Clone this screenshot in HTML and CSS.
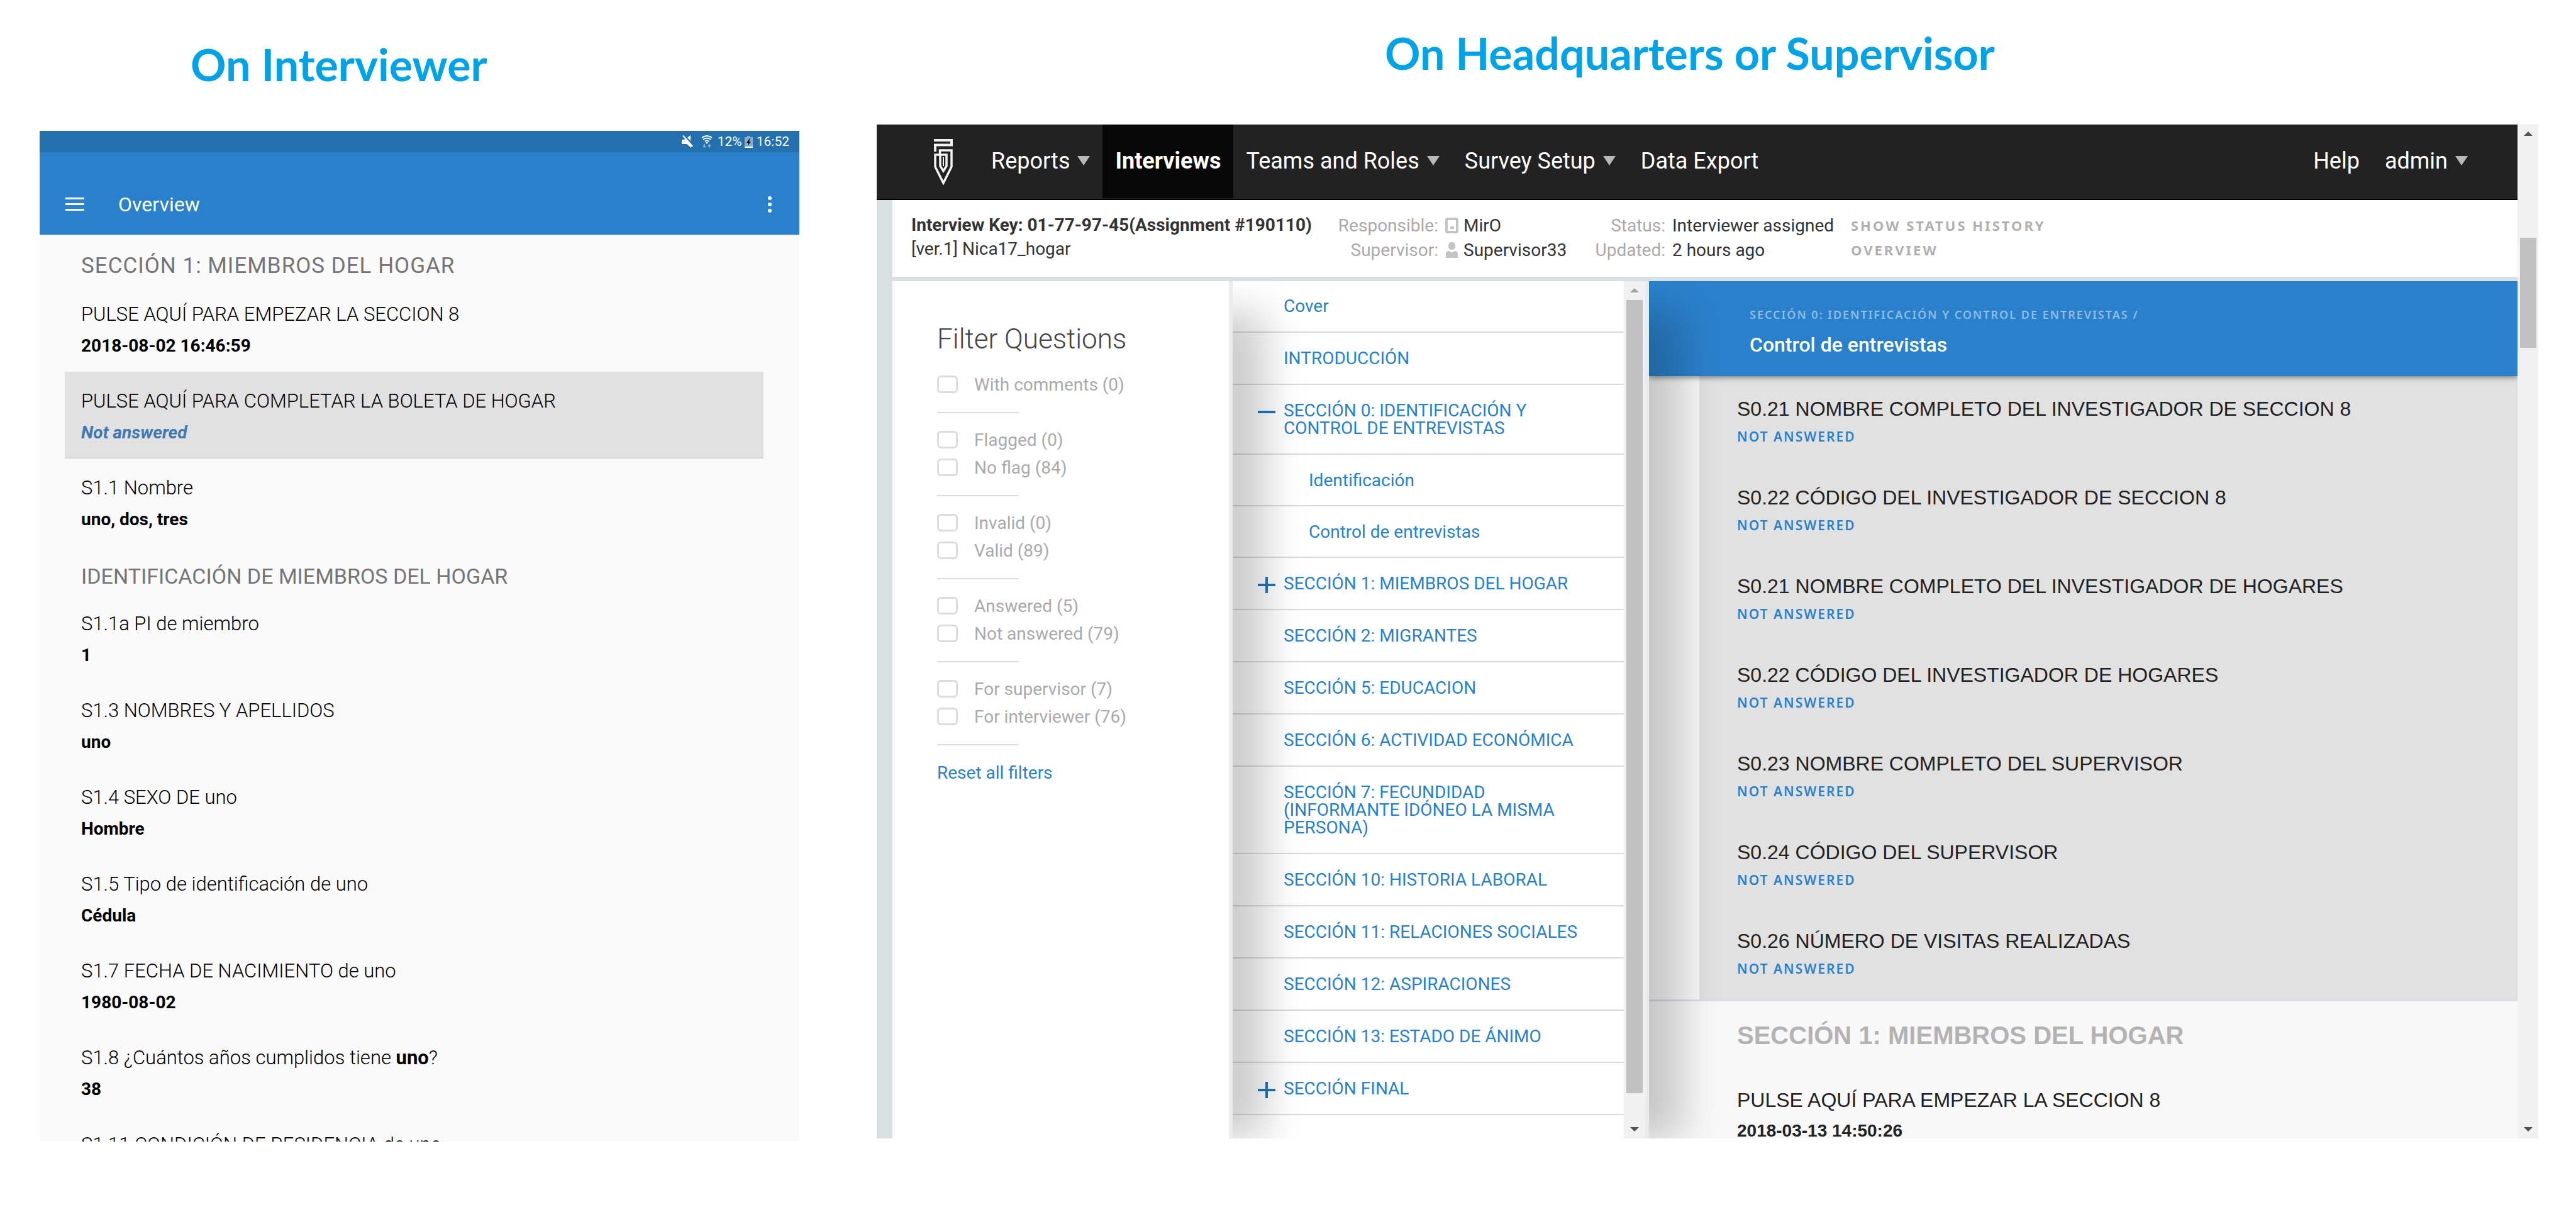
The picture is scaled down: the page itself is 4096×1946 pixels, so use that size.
FILE: index.html
```html
<!DOCTYPE html>
<html lang="es">
<head>
<meta charset="utf-8">
<title>Interview overview</title>
<link rel="stylesheet" href="styles.css">
</head>
<body>
<main class="page">
  <section class="side side-interviewer">
    <h1 class="side-title">On Interviewer</h1>
    <div class="tablet">
      <div class="status-bar">
        <svg class="ico-mute" viewBox="0 0 18 20"><path d="M0 7h4l3-2 8 13v2L8 14H0zM14 0v9L9 4zM1 1l2-1 15 17-2 2z" fill="#fff"/></svg>
        <svg class="ico-wifi" viewBox="0 0 18 20"><g fill="none" stroke="#fff" stroke-width="2"><path d="M1 4q8-6 16 0M3 7q6-5 12 0M6 10q3-3 6 0"/></g><path d="M7 11h4l-2 3z" fill="#fff"/><path d="M5 14v5M3 17l2 2 2-2M13 20v-5M11 17l2-2 2 2" fill="none" stroke="#7fa9cf" stroke-width="2"/></svg>
        <span class="battery-level">12%</span>
        <svg class="ico-battery" viewBox="0 0 13 19"><path d="M4 0h5v2h4v17H0V2h4z" fill="#86acce"/><path d="M0 17h13v2H0z" fill="#fff"/><path d="M8 4L3 11h3l-1 5 5-7H7l2-5z" fill="#111"/></svg>
        <time>16:52</time>
      </div>
      <header class="app-bar">
        <button class="icon-button" aria-label="Menu"><svg width="30" height="22" viewBox="0 0 30 22"><path d="M0 0h30v3H0zM0 9h30v3H0zM0 18h30v3H0z" fill="#fff"/></svg></button>
        <h2 class="app-title">Overview</h2>
        <button class="icon-button" aria-label="More"><svg width="6" height="26" viewBox="0 0 6 26"><g fill="#fff"><circle cx="3" cy="3" r="3"/><circle cx="3" cy="13" r="3"/><circle cx="3" cy="23" r="3"/></g></svg></button>
      </header>
      <div class="answers">
        <h3 class="group-title group-title-main">SECCIÓN 1: MIEMBROS DEL HOGAR</h3>
        <div class="entry"><p class="question">PULSE AQUÍ PARA EMPEZAR LA SECCION 8</p><p class="answer">2018-08-02 16:46:59</p></div>
        <div class="entry entry-empty"><p class="question">PULSE AQUÍ PARA COMPLETAR LA BOLETA DE HOGAR</p><p class="answer">Not answered</p></div>
        <div class="entry"><p class="question">S1.1 Nombre</p><p class="answer">uno, dos, tres</p></div>
        <h3 class="group-title">IDENTIFICACIÓN DE MIEMBROS DEL HOGAR</h3>
        <div class="entry"><p class="question">S1.1a PI de miembro</p><p class="answer">1</p></div>
        <div class="entry"><p class="question">S1.3 NOMBRES Y APELLIDOS</p><p class="answer">uno</p></div>
        <div class="entry"><p class="question">S1.4 SEXO DE uno</p><p class="answer">Hombre</p></div>
        <div class="entry"><p class="question">S1.5 Tipo de identificación de uno</p><p class="answer">Cédula</p></div>
        <div class="entry"><p class="question">S1.7 FECHA DE NACIMIENTO de uno</p><p class="answer">1980-08-02</p></div>
        <div class="entry"><p class="question">S1.8 ¿Cuántos años cumplidos tiene <b>uno</b>?</p><p class="answer">38</p></div>
        <div class="entry"><p class="question">S1.11 CONDICIÓN DE RESIDENCIA de uno</p></div>
      </div>
    </div>
  </section>

  <section class="side side-hq">
    <h1 class="side-title">On Headquarters or Supervisor</h1>
    <div class="browser">
      <div class="site">
        <nav class="navbar">
          <a class="brand" href="#" aria-label="Survey Solutions"><svg width="30" height="73" viewBox="0 0 30 73"><g fill="none" stroke="#f2f2f2" stroke-width="4"><path d="M0 2H28V9.500H2V20"/><path d="M9.500 27V18H28V44L15 70L2 44V25H20V43L15 51L10 43V25" stroke-width="3.500"/><path d="M15 29V43" stroke-width="2"/></g></svg></a>
          <button class="nav-item">Reports<span class="caret"></span></button>
          <a class="nav-item active" href="#">Interviews</a>
          <button class="nav-item">Teams and Roles<span class="caret"></span></button>
          <button class="nav-item">Survey Setup<span class="caret"></span></button>
          <a class="nav-item" href="#">Data Export</a>
          <a class="nav-item push" href="#">Help</a>
          <button class="nav-item">admin<span class="caret"></span></button>
        </nav>
        <div class="workspace">
          <header class="info">
            <div class="info-key"><strong>Interview Key: 01-77-97-45(Assignment #190110)</strong><br>[ver.1] Nica17_hogar</div>
            <dl class="facts facts-people">
              <dt>Responsible:</dt>
              <dd><svg width="21" height="25" viewBox="0 0 21 25"><rect x="2" y="2" width="17" height="21" rx="2" fill="none" stroke="#c4c4c4" stroke-width="4"/><path d="M8 14h6v4H8z" fill="#c4c4c4"/></svg>MirO</dd>
              <dt>Supervisor:</dt>
              <dd><svg width="21" height="25" viewBox="0 0 21 25"><path d="M10.500 0C14 0 16 2 16 6s-2 6-5.500 6S5 10 5 6s2-6 5.500-6zM1 25v-6c0-4 3-5 5-5q4.500 4 9 0c2 0 5 1 5 5v6z" fill="#c4c4c4"/></svg>Supervisor33</dd>
            </dl>
            <dl class="facts">
              <dt>Status:</dt><dd>Interviewer assigned</dd>
              <dt>Updated:</dt><dd>2 hours ago</dd>
            </dl>
            <div class="info-actions"><button>SHOW STATUS HISTORY</button><button>OVERVIEW</button></div>
          </header>
          <div class="columns">
            <form class="filters">
              <h2>Filter Questions</h2>
              <div class="filter-group"><label><input type="checkbox">With comments (0)</label></div>
              <div class="filter-group"><label><input type="checkbox">Flagged (0)</label><label><input type="checkbox">No flag (84)</label></div>
              <div class="filter-group"><label><input type="checkbox">Invalid (0)</label><label><input type="checkbox">Valid (89)</label></div>
              <div class="filter-group"><label><input type="checkbox">Answered (5)</label><label><input type="checkbox">Not answered (79)</label></div>
              <div class="filter-group"><label><input type="checkbox">For supervisor (7)</label><label><input type="checkbox">For interviewer (76)</label></div>
              <button type="reset" class="reset">Reset all filters</button>
            </form>
            <div class="sections">
              <ul class="section-list">
                <li><a href="#">Cover</a></li>
                <li><a href="#">INTRODUCCIÓN</a></li>
                <li><button class="toggle open" aria-label="Collapse"></button><a href="#">SECCIÓN 0: IDENTIFICACIÓN Y CONTROL DE ENTREVISTAS</a></li>
                <li class="nested"><a href="#">Identificación</a></li>
                <li class="nested"><a href="#">Control de entrevistas</a></li>
                <li><button class="toggle" aria-label="Expand"></button><a href="#">SECCIÓN 1: MIEMBROS DEL HOGAR</a></li>
                <li><a href="#">SECCIÓN 2: MIGRANTES</a></li>
                <li><a href="#">SECCIÓN 5: EDUCACION</a></li>
                <li><a href="#">SECCIÓN 6: ACTIVIDAD ECONÓMICA</a></li>
                <li><a href="#">SECCIÓN 7: FECUNDIDAD (INFORMANTE IDÓNEO LA MISMA PERSONA)</a></li>
                <li><a href="#">SECCIÓN 10: HISTORIA LABORAL</a></li>
                <li><a href="#">SECCIÓN 11: RELACIONES SOCIALES</a></li>
                <li><a href="#">SECCIÓN 12: ASPIRACIONES</a></li>
                <li><a href="#">SECCIÓN 13: ESTADO DE ÁNIMO</a></li>
                <li><button class="toggle" aria-label="Expand"></button><a href="#">SECCIÓN FINAL</a></li>
              </ul>
              <div class="scrollbar scrollbar-sections" aria-hidden="true"><i class="up"></i><i class="thumb"></i><i class="down"></i></div>
            </div>
            <div class="content">
              <header class="crumbs">
                <p class="crumb-path">SECCIÓN 0: IDENTIFICACIÓN Y CONTROL DE ENTREVISTAS /</p>
                <h2>Control de entrevistas</h2>
              </header>
              <div class="unanswered">
                <div class="item"><p class="item-q">S0.21 NOMBRE COMPLETO DEL INVESTIGADOR DE SECCION 8</p><p class="item-none">NOT ANSWERED</p></div>
                <div class="item"><p class="item-q">S0.22 CÓDIGO DEL INVESTIGADOR DE SECCION 8</p><p class="item-none">NOT ANSWERED</p></div>
                <div class="item"><p class="item-q">S0.21 NOMBRE COMPLETO DEL INVESTIGADOR DE HOGARES</p><p class="item-none">NOT ANSWERED</p></div>
                <div class="item"><p class="item-q">S0.22 CÓDIGO DEL INVESTIGADOR DE HOGARES</p><p class="item-none">NOT ANSWERED</p></div>
                <div class="item"><p class="item-q">S0.23 NOMBRE COMPLETO DEL SUPERVISOR</p><p class="item-none">NOT ANSWERED</p></div>
                <div class="item"><p class="item-q">S0.24 CÓDIGO DEL SUPERVISOR</p><p class="item-none">NOT ANSWERED</p></div>
                <div class="item"><p class="item-q">S0.26 NÚMERO DE VISITAS REALIZADAS</p><p class="item-none">NOT ANSWERED</p></div>
              </div>
              <div class="next-section">
                <h3>SECCIÓN 1: MIEMBROS DEL HOGAR</h3>
                <div class="item"><p class="item-q">PULSE AQUÍ PARA EMPEZAR LA SECCION 8</p><p class="item-a">2018-03-13 14:50:26</p></div>
              </div>
            </div>
          </div>
        </div>
      </div>
      <div class="scrollbar scrollbar-page" aria-hidden="true"><i class="up"></i><i class="thumb"></i><i class="down"></i></div>
    </div>
  </section>
</main>
</body>
</html>
```
FILE: styles.css
```css
* { box-sizing: border-box; }
body { margin: 0; background: #fff; font-family: Roboto, sans-serif; }
h1, h2, h3, p, ul, dl, dd { margin: 0; padding: 0; font-weight: inherit; }
button { border: 0; padding: 0; background: none; font: inherit; color: inherit; cursor: pointer; }
a { color: inherit; text-decoration: none; }

.page {
  display: grid;
  grid-template-columns: 1208fr 2642fr;
  gap: 123px;
  height: 100vh;
  padding: 0 60px 0 63px;
}
.side { display: flex; flex-direction: column; min-width: 0; min-height: 0; }
.side-interviewer { padding-bottom: 131px; }
.side-hq { padding-bottom: 136px; }
.side-title {
  flex: none;
  font: bold 70px/84px Lato, sans-serif;
  color: #00a2e8;
}
.side-interviewer .side-title { height: 208px; padding: 60px 0 0 240px; }
.side-hq .side-title { height: 198px; padding: 42px 0 0 808px; }

/* tablet */
.tablet { flex: 1; display: flex; flex-direction: column; min-height: 0; overflow: hidden; background: #fafafa; }
.status-bar {
  flex: none;
  display: flex;
  align-items: center;
  justify-content: flex-end;
  height: 34px;
  padding-right: 16px;
  background: #246fae;
  color: #fff;
  font-size: 21px;
}
.ico-mute { width: 18px; height: 20px; margin-right: 13px; }
.ico-wifi { width: 18px; height: 20px; margin-right: 8px; }
.ico-battery { width: 13px; height: 19px; margin: 0 6px 0 4px; }
.app-bar {
  flex: none;
  display: flex;
  align-items: center;
  height: 132px;
  padding: 34px 44px 0 41px;
  border-bottom: 1px solid #d5dbe0;
  background: #2a81cb;
  color: #fff;
}
.icon-button { display: flex; }
.app-title { flex: 1; padding-left: 54px; font-size: 32px; line-height: 40px; }
.answers { padding: 0 57px 0 40px; }
.group-title { padding: 25px 26px 5px; font-size: 34px; line-height: 48px; color: #757575; }
.group-title-main { padding-bottom: 6px; font-size: 35px; letter-spacing: 1px; }
.entry { padding: 23px 26px 21px; color: #000; }
.entry-empty { background: #e1e1e1; box-shadow: inset 0 -2px #d6d6d6; }
.question { font-size: 31px; line-height: 48px; font-weight: 300; }
.question b { font-weight: 700; }
.answer { margin-top: 6px; font-size: 28px; line-height: 40px; font-weight: 700; }
.entry-empty .answer { color: #3f78b0; font-style: italic; }

/* browser */
.browser { flex: 1; display: flex; min-height: 0; overflow: hidden; }
.site { flex: 1; display: flex; flex-direction: column; min-width: 0; }
.navbar {
  flex: none;
  display: flex;
  height: 120px;
  padding: 0 59px 0 91px;
  border-bottom: 2px solid #000;
  background: #222;
  color: #fff;
  font-size: 36px;
}
.brand { display: flex; align-items: center; margin-right: 41px; }
.nav-item { display: flex; align-items: center; height: 117px; padding: 0 20px 2px; white-space: nowrap; }
.nav-item.active { background: #080808; font-weight: 700; }
.nav-item.push { margin-left: auto; }
.caret { margin-left: 12px; border: 10px solid transparent; border-top: 15px solid #b8b8b8; border-bottom: 0; }
.workspace { flex: 1; display: flex; flex-direction: column; min-height: 0; padding-left: 25px; background: #dadfe2; }
.info {
  flex: none;
  display: grid;
  grid-template-columns: 677px 410px 407px auto;
  height: 122px;
  margin-bottom: 7px;
  padding: 21px 0 0 30px;
  background: #fff;
  color: #333;
  font-size: 28px;
  line-height: 39px;
  white-space: nowrap;
}
.info-key { line-height: 38px; }
.info-key strong { font-weight: 700; }
.facts { display: grid; grid-template-columns: 112px auto; grid-template-rows: 39px 39px; column-gap: 11px; justify-content: start; }
.facts-people { grid-template-columns: 161px auto; }
.facts dt { color: #aaa; text-align: right; }
.facts dd { display: flex; align-items: center; gap: 8px; }
.info-actions { display: flex; flex-direction: column; align-items: flex-start; }
.info-actions button { font: 700 22px/39px "Noto Sans", sans-serif; letter-spacing: 3px; color: #b0b0b0; }

.columns { flex: 1; display: flex; min-height: 0; }
.filters {
  flex: none;
  width: 541px;
  padding: 66px 0 0 71px;
  border-right: 6px solid #ebebeb;
  background: #fff;
  color: #aaa;
  font-size: 28px;
}
.filters h2 { margin-bottom: 24px; font-size: 44px; line-height: 52px; font-weight: 300; color: #444; }
.filter-group label { display: flex; align-items: center; height: 44px; gap: 26px; }
.filter-group::after { content: ""; display: block; width: 130px; height: 2px; margin: 22px 0 20px; background: #dadfe2; }
.filter-group input {
  appearance: none;
  width: 33px;
  height: 28px;
  margin: 0;
  border: 3px solid #ddd;
  border-radius: 6px;
  background: #fff;
}
.reset { margin-top: 2px; line-height: 44px; color: #2a81cb; }

.sections, .content { position: relative; overflow: hidden; }
.sections { flex: none; display: flex; width: 662px; background: #fff; border-right: 6px solid #ebebeb; }
.section-list { flex: 1; list-style: none; color: #2a81cb; font-size: 28px; line-height: 28px; }
.section-list li { position: relative; padding: 27px 50px 26px 81px; border-bottom: 2px solid #dadada; }
.section-list li:first-child { padding-top: 26px; }
.section-list li.nested { padding: 27px 50px 25px 121px; }
/* soft shade cast by the column on the left */
.sections::before, .content::before {
  content: "";
  position: absolute;
  z-index: 1;
  top: 50px;
  bottom: 0;
  left: -200px;
  width: 200px;
  box-shadow: 52px 0 60px rgba(0, 0, 0, 0.2);
  pointer-events: none;
}
.toggle { position: absolute; left: 40px; top: 30px; width: 28px; height: 26px; }
.toggle::before, .toggle::after { content: ""; position: absolute; background: #2474bd; }
.toggle::before { left: 0; right: 0; top: 11px; height: 4px; }
.toggle::after { top: 0; bottom: 0; left: 12px; width: 4px; }
.toggle.open::after { display: none; }

.scrollbar { flex: none; display: flex; flex-direction: column; align-items: center; width: 34px; padding: 11px 0; background: #f1f1f1; }
.scrollbar .up { border: 7px solid transparent; border-bottom: 7px solid #555; border-top: 0; }
.scrollbar .down { margin-top: auto; border: 7px solid transparent; border-top: 7px solid #505050; border-bottom: 0; }
.scrollbar .thumb { width: 26px; background: #c0c0c0; }
.scrollbar-sections .up { border-bottom-color: #a3a3a3; }
.scrollbar-sections .thumb { flex: 1; margin: 12px 0 54px; }
.scrollbar-page { width: 33px; }
.scrollbar-page .thumb { height: 11%; margin-top: 162px; }

.content { flex: 1; display: flex; flex-direction: column; min-width: 0; background: #f8f8f8; }
.crumbs {
  position: relative;
  flex: none;
  height: 151px;
  padding: 39px 0 0 160px;
  background: #2a81cb;
  box-shadow: 0 3px 8px rgba(0, 0, 0, 0.4);
  color: #fff;
}
.crumb-path { font: 600 18px/28px "Noto Sans", sans-serif; letter-spacing: 2px; color: #8fbce4; }
.crumbs h2 { margin-top: 14px; font-size: 32px; line-height: 40px; font-weight: 500; }
.unanswered { flex: none; margin-left: 80px; padding: 4px 0 0 60px; background: #e1e1e1; }
.item { padding: 28px 0 35px; }
.item-q { font: 32px/40px "Liberation Sans", sans-serif; color: #222; }
.item-none { margin-top: 10px; font: 600 21px/28px "Noto Sans", sans-serif; letter-spacing: 2px; color: #2a81cb; }
.item-a { margin-top: 15px; font: bold 28px/28px "Liberation Sans", sans-serif; color: #222; }
.next-section { flex: none; padding: 32px 0 0 140px; border-top: 3px solid #dadfe2; }
.next-section h3 { margin-bottom: 33px; font: bold 40px/44px "Liberation Sans", sans-serif; color: #b3b3b3; }
```
